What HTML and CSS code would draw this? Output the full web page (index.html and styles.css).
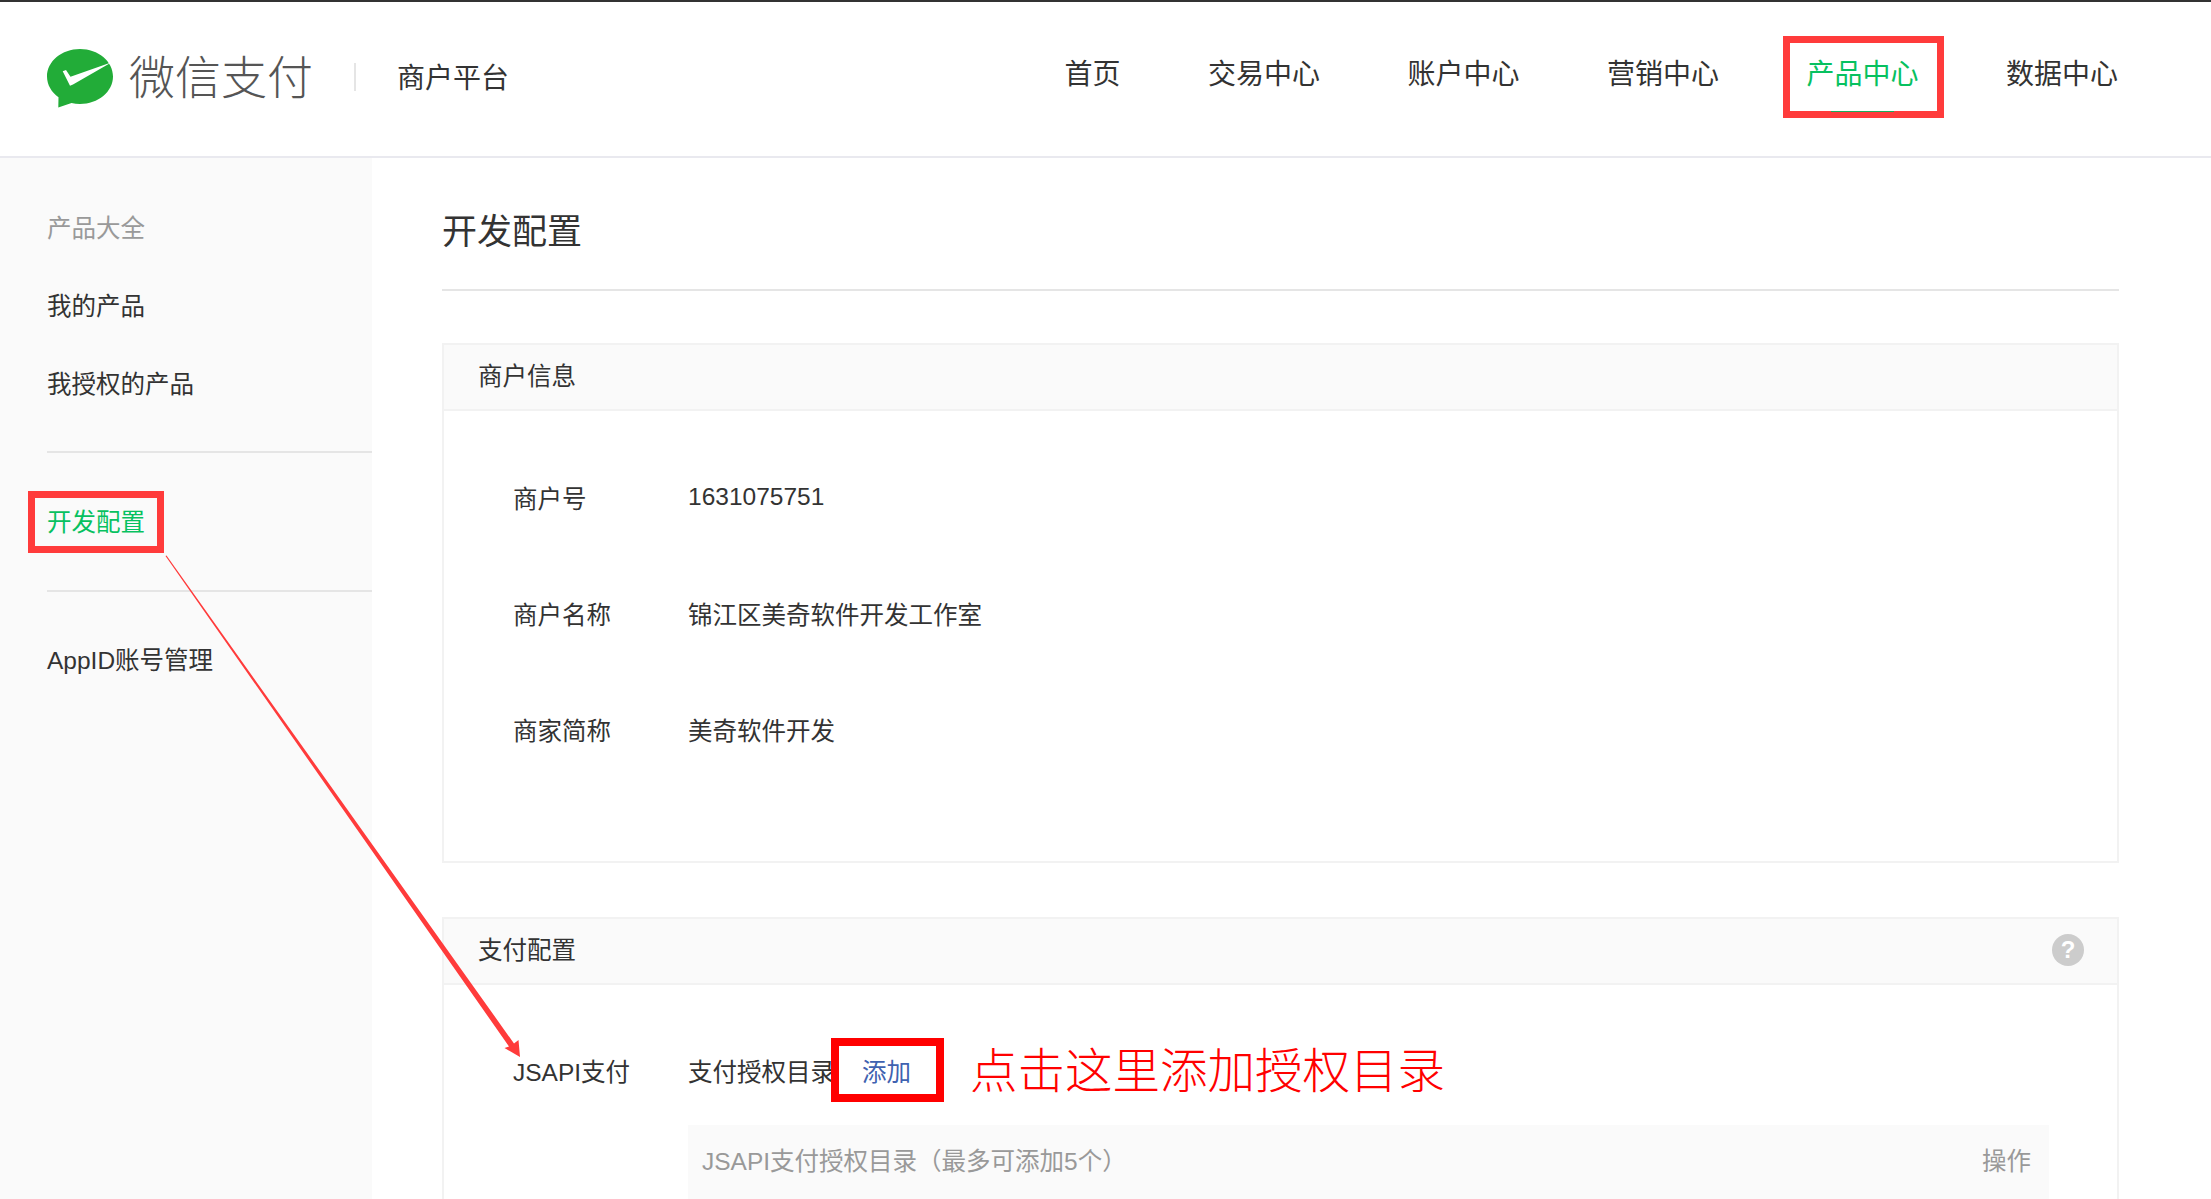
FILE: index.html
```html
<!doctype html>
<html>
    <head>
        <meta charset="utf-8">
        <meta name="viewport" content="width=device-width,initial-scale=1">
        <title>微信支付 商户平台</title>
        <link rel="stylesheet" href="styles.css">
    </head>
    <body>
        <div class="page">
            <header class="topbar">
                <div class="brand">
                    <svg class="brand-icon" viewBox="0 0 66 60" width="66" height="60">
                        <path fill="#22ac38" d="M33 0C51.200 0 66 12.300 66 27.500S51.200 55 33 55c-3 0-5.800-.3-8.500-.9L11.300 58.500l.2-10.300C4.500 43.200 0 35.800 0 27.500 0 12.300 14.800 0 33 0z"/>
                        <path fill="#fff" d="M15.700 22.300L19 21l4.500 6.800L64.700 13.300 26 35.500 23 36.700z"/>
                    </svg>
                    <span class="brand-name">微信支付</span>
                    <span class="brand-sep"></span>
                    <span class="brand-sub">商户平台</span>
                </div>
                <nav class="nav">
                    <a class="nav-item">首页</a>
                    <a class="nav-item">交易中心</a>
                    <a class="nav-item">账户中心</a>
                    <a class="nav-item">营销中心</a>
                    <a class="nav-item active">产品中心<span class="mark mark-nav"></span></a>
                    <a class="nav-item">数据中心</a>
                </nav>
            </header>
            <div class="layout">
                <aside class="sidebar">
                    <div class="side-group">
                        <div class="side-title">产品大全</div>
                        <a class="side-item">我的产品</a>
                        <a class="side-item">我授权的产品</a>
                    </div>
                    <div class="side-group">
                        <a class="side-item active">开发配置<span class="mark mark-side"></span></a>
                    </div>
                    <div class="side-group">
                        <a class="side-item">AppID账号管理</a>
                    </div>
                </aside>
                <main class="main">
                    <h1 class="page-title">开发配置</h1>
                    <section class="panel panel-info">
                        <div class="panel-head">商户信息</div>
                        <div class="panel-body">
                            <div class="row"><span class="row-label">商户号</span><span>1631075751</span></div>
                            <div class="row"><span class="row-label">商户名称</span><span>锦江区美奇软件开发工作室</span></div>
                            <div class="row"><span class="row-label">商家简称</span><span>美奇软件开发</span></div>
                        </div>
                    </section>
                    <section class="panel panel-config">
                        <div class="panel-head">
                            <span>支付配置</span>
                            <span class="help">?</span>
                        </div>
                        <div class="panel-body panel-pay">
                            <div class="row row-pay">
                                <span class="row-label">JSAPI支付</span>
                                <span>支付授权目录</span>
                                <a class="add-link">添加<span class="mark mark-add"></span></a>
                                <span class="note">点击这里添加授权目录</span>
                            </div>
                            <div class="dir-table">
                                <span>JSAPI支付授权目录（最多可添加5个）</span>
                                <span>操作</span>
                            </div>
                        </div>
                    </section>
                </main>
            </div>
            <svg class="arrow" width="2211" height="1199" viewBox="0 0 2211 1199">
                <path fill="#ff3b3b" d="M165.500 556L166.500 555.500 514 1043.500 518.500 1040 520 1057 504.500 1048 509 1046.500z"/>
            </svg>
        </div>
    </body>
</html>
```

FILE: styles.css
```css
body {
    margin: 0;
    font-family: "Liberation Sans","Noto Sans CJK SC",sans-serif;
    font-size: 24.5px;
    color: #333;
    background: #fff;
}
a {
    color: inherit;
    text-decoration: none;
}
.page {
    position: relative;
    height: 1199px;
    overflow: hidden;
}
.topbar {
    height: 154px;
    border-top: 2px solid #333;
    border-bottom: 2px solid #e9e9ef;
    padding: 0 93px 0 47px;
    display: flex;
    align-items: center;
    justify-content: space-between;
}
.brand {
    display: flex;
    align-items: center;
    margin-top: -7px;
}
.brand-icon {
    margin-top: 6px;
}
.brand-name {
    margin: -4px 0 0 16px;
    font-size: 46px;
    font-weight: 300;
    color: #555;
}
.brand-sep {
    width: 2px;
    height: 28px;
    margin: 2px 41px 0 41px;
    background: #e5e5e5;
}
.brand-sub {
    font-size: 28px;
}
.nav {
    display: flex;
    gap: 87.500px;
    margin-top: -14px;
}
.nav-item {
    position: relative;
    font-size: 28px;
}
.nav-item.active {
    color: #07c160;
}
.nav-item.active::after {
    content: "";
    position: absolute;
    left: 25px;
    right: 24px;
    bottom: -20px;
    height: 1.500px;
    background: #1aad5a;
}
/* hand drawn red boxes over the screenshot */
.mark {
    position: absolute;
    box-sizing: border-box;
    border: 7px solid #ff3b3b;
}
.mark-nav {
    left: -23px;
    right: -26px;
    top: -16px;
    bottom: -26px;
}
.mark-side {
    left: -19px;
    right: -19px;
    top: -14px;
    bottom: -12px;
}
.mark-add {
    left: -31px;
    right: -33px;
    top: -15px;
    bottom: -14px;
    border-color: #f00;
    border-width: 8px;
}
.layout {
    display: flex;
}
.sidebar {
    width: 325px;
    height: 1043px;
    padding-left: 47px;
    background: #fafafa;
}
.side-group {
    border-bottom: 2px solid #e5e5e5;
}
.side-group:first-child {
    padding: 53px 0 48px;
}
.side-group:nth-child(2) {
    padding: 52px 0 49px;
}
.side-group:last-child {
    padding-top: 51px;
    border-bottom: 0;
}
.side-title {
    height: 36px;
    line-height: 36px;
    color: #999;
}
.side-title + .side-item {
    margin-top: 42px;
}
.side-item {
    display: block;
    width: fit-content;
    position: relative;
    height: 36px;
    line-height: 36px;
}
.side-item + .side-item {
    margin-top: 42px;
}
.side-item.active {
    color: #07c160;
}
.main {
    flex: 1;
    padding: 0 92px 0 70px;
}
.page-title {
    margin: 0;
    height: 133px;
    box-sizing: border-box;
    padding-top: 49px;
    line-height: 50px;
    font-size: 35px;
    font-weight: 400;
    border-bottom: 2px solid #e5e5e5;
}
.panel {
    margin-top: 52px;
    border: 2px solid #f2f2f2;
    border-bottom: 0;
}
.panel-info {
    border-bottom: 2px solid #f2f2f2;
}
.panel-config {
    margin-top: 54px;
}
.panel-head {
    height: 59px;
    padding: 0 33px 5px 34px;
    display: flex;
    align-items: center;
    justify-content: space-between;
    background: #fafafa;
    border-bottom: 2px solid #f2f2f2;
}
.help {
    width: 32px;
    height: 32px;
    margin-top: 3px;
    border-radius: 50%;
    background: #ccc;
    color: #fff;
    font-size: 24px;
    font-weight: bold;
    line-height: 32px;
    text-align: center;
}
.panel-body {
    height: 450px;
    box-sizing: border-box;
    padding: 28px 68px 0 69px;
}
.panel-pay {
    padding-top: 0;
}
.row {
    display: flex;
    height: 116px;
    align-items: center;
}
.row-label {
    width: 175px;
}
.row-pay {
    height: 109px;
    padding-top: 31px;
}
.add-link {
    position: relative;
    margin-left: 27px;
    color: #3f62b0;
}
.note {
    margin: 0 0 6px 59px;
    font-family: "Noto Sans CJK SC",sans-serif;
    font-size: 47.500px;
    font-weight: 300;
    color: #f00;
}
.dir-table {
    display: flex;
    justify-content: space-between;
    align-items: center;
    margin-left: 175px;
    height: 68px;
    padding: 0 18px 12px 14px;
    background: #fafafa;
    color: #999;
}
.arrow {
    position: absolute;
    left: 0;
    top: 0;
    pointer-events: none;
}
```
